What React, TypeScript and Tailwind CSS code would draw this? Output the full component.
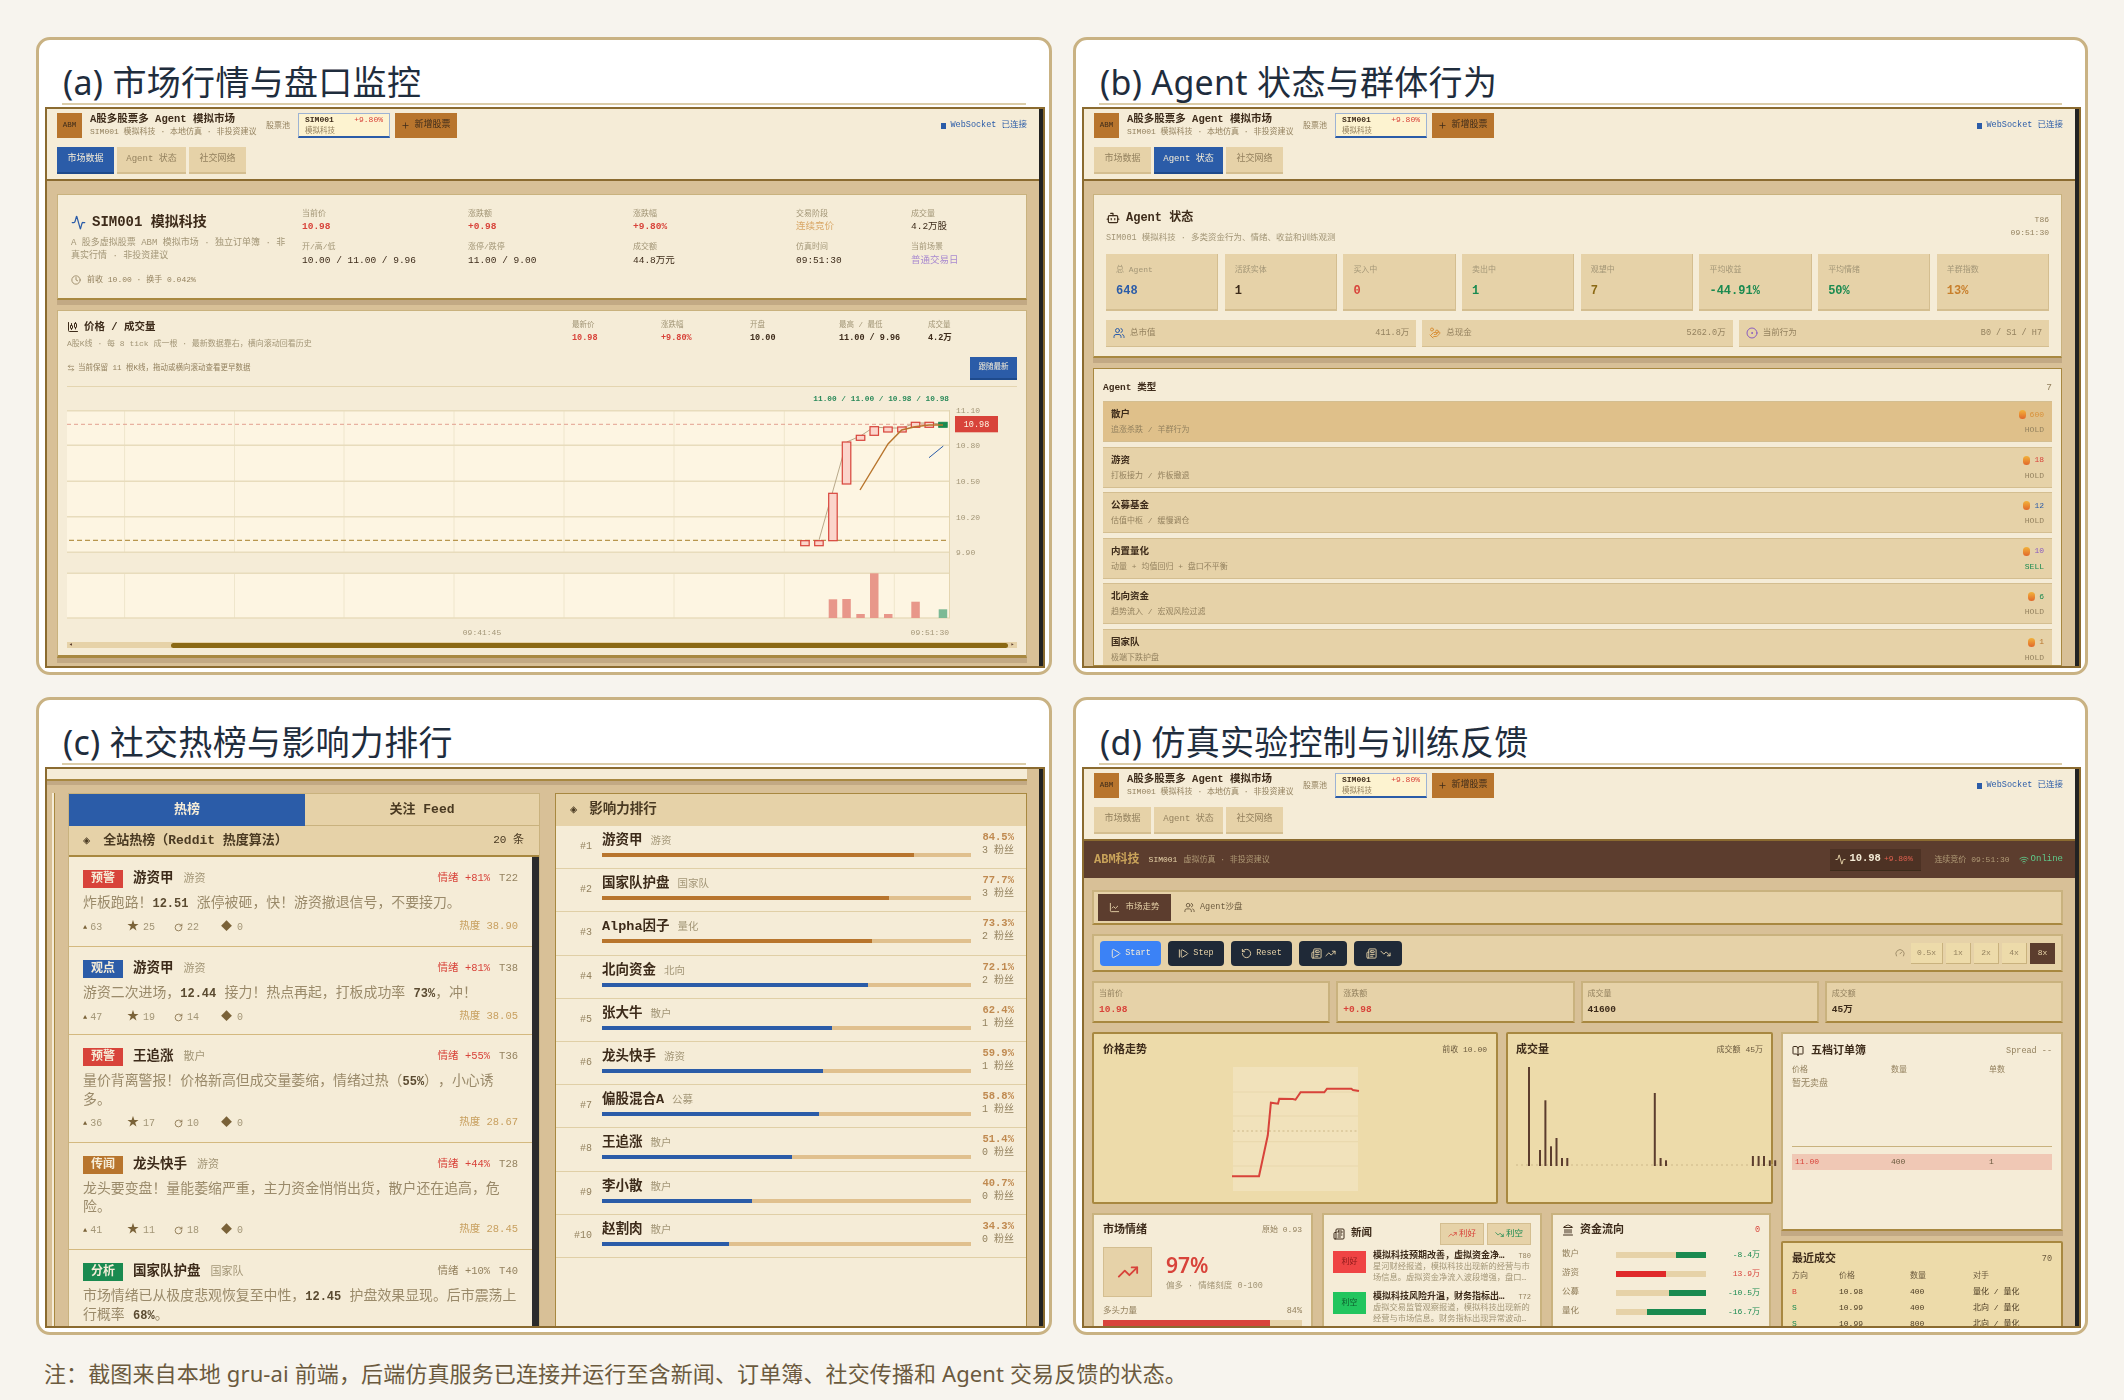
import type { ReactNode } from "react";
import {
  Activity,
  ArrowLeftRight,
  Bot,
  BookOpen,
  ChartCandlestick,
  ChartLine,
  CircleDot,
  Clock,
  Gauge,
  HandCoins,
  Landmark,
  Newspaper,
  Play,
  Plus,
  RotateCcw,
  RotateCw,
  StepForward,
  TrendingDown,
  TrendingUp,
  Users,
  Wifi,
} from "lucide-react";

// 子图外框: 标题 + 下划线 + 截图区域
const Figure = ({ title, children }: { title: string; children: ReactNode }) => (
  <section className="h-[638px] border-[3px] border-[#c9b283] rounded-[14px] bg-white pl-[6px] pr-[4px]">
    <h2 className="pt-[22px] pl-[18px] text-[34px] leading-[40px] text-[#1f2d3d] tracking-[0.3px] whitespace-nowrap">
      {title}
    </h2>
    <div className="ml-[17px] mr-[19px] mt-px mb-[2px] h-[2px] bg-[#dccda8]" />
    <div className="h-[561px] flex border-[2px] border-[#8b6b30] overflow-hidden bg-[#d8c097] blur-[0.4px] [font-family:'Liberation_Mono','Noto_Sans_CJK_SC',monospace]">
      <div className="flex-1 min-w-0 flex flex-col">{children}</div>
      <div className="w-[4px] bg-[#222]" />
    </div>
  </section>
);

const Header = ({ active }: { active: number }) => (
  <header className="shrink-0 h-[72px] pt-[4px] pl-[10px] pr-[12px] bg-[#f5ecd7] border-b-[2px] border-[#8b6b30]">
    <div className="h-[25px] flex items-center">
      <div className="w-[25px] h-[25px] flex items-center justify-center bg-[#b8752d] text-[7.5px] text-[#3d2b1a]">ABM</div>
      <div className="ml-[8px] w-[168px]">
        <div className="text-[10.5px] leading-[13px] font-bold text-[#3d2b1a] whitespace-nowrap">A股多股票多 Agent 模拟市场</div>
        <div className="text-[8px] leading-[12px] text-[#94825f] whitespace-nowrap">SIM001 模拟科技 · 本地仿真 · 非投资建议</div>
      </div>
      <span className="ml-[8px] w-[24px] text-[8px] text-[#94825f] whitespace-nowrap">股票池</span>
      <div className="ml-[8px] w-[92px] h-[25px] px-[6px] bg-[#fdf3d0] border border-[#9db3d4] border-b-[2px] border-b-[#2b5ca8]">
        <div className="flex justify-between text-[8px] leading-[12px]">
          <b className="text-[#3d2b1a]">SIM001</b>
          <span className="text-[#d8433a]">+9.80%</span>
        </div>
        <div className="text-[7.5px] leading-[10px] text-[#94825f]">模拟科技</div>
      </div>
      <div className="ml-[5px] w-[62px] h-[25px] flex items-center justify-center gap-[4px] bg-[#b8752d] text-[9px] text-[#3d2b1a]">
        <Plus className="w-[9px] h-[9px]" />
        新增股票
      </div>
      <div className="ml-auto flex items-center gap-[4px] text-[8.5px] text-[#2b5ca8] whitespace-nowrap">
        <span className="w-[5px] h-[6px] bg-[#2b5ca8]" />
        WebSocket 已连接
      </div>
    </div>
    <div className="mt-[9px] flex gap-[3px] text-[9px]">
      {["市场数据", "Agent 状态", "社交网络"].map((t, i) => (
        <div
          key={t}
          className={`h-[27px] flex items-center justify-center border-b-[2px] whitespace-nowrap ${i === 1 ? "w-[69px]" : "w-[57px]"} ${
            i === active ? "bg-[#2b5ca8] text-[#f5ecd7] border-[#1e4a8c]" : "bg-[#e6d2a8] text-[#94825f] border-[#d4be90]"
          }`}
        >
          {t}
        </div>
      ))}
    </div>
  </header>
);

// (a)
const quote = [
  { x: "w-[166px]", a: ["当前价", "10.98", "text-[#d8433a] font-bold"], b: ["开/高/低", "10.00 / 11.00 / 9.96", "text-[#3d2b1a]"] },
  { x: "w-[165px]", a: ["涨跌额", "+0.98", "text-[#d8433a] font-bold"], b: ["涨停/跌停", "11.00 / 9.00", "text-[#3d2b1a]"] },
  { x: "w-[163px]", a: ["涨跌幅", "+9.80%", "text-[#d8433a] font-bold"], b: ["成交额", "44.8万元", "text-[#3d2b1a]"] },
  { x: "w-[115px]", a: ["交易阶段", "连续竞价", "text-[#d9a868]"], b: ["仿真时间", "09:51:30", "text-[#3d2b1a]"] },
  { x: "w-[100px]", a: ["成交量", "4.2万股", "text-[#3d2b1a]"], b: ["当前场景", "普通交易日", "text-[#a98ad0]"] },
];

const chartHead = [
  ["最新价", "10.98", "text-[#d8433a] font-bold"],
  ["涨跌幅", "+9.80%", "text-[#d8433a] font-bold"],
  ["开盘", "10.00", "text-[#3d2b1a] font-bold"],
  ["最高 / 最低", "11.00 / 9.96", "text-[#3d2b1a] font-bold"],
  ["成交量", "4.2万", "text-[#3d2b1a] font-bold"],
];

const candles = [
  [800.7, 540.7, 5],
  [814.7, 540.7, 5],
  [828.7, 493.3, 47.4],
  [842.3, 442, 42],
  [856.3, 435.3, 5],
  [870, 426.7, 8.6],
  [883.7, 427, 5],
  [897.7, 427, 5],
  [911.3, 422.3, 5],
  [925, 422.3, 5],
];

const volumes = [
  [828.7, 599.3],
  [842.3, 599],
  [856.3, 614],
  [870, 573.3],
  [884, 614],
  [911.3, 601.7],
];

const KlineChart = () => (
  <svg viewBox="67 387 950 255" className="w-[950px] h-[255px] block">
    <rect x="67" y="410" width="883" height="143" fill="#fdf5e2" />
    <rect x="67" y="573" width="883" height="45" fill="#fdf5e2" />
    {[124.6, 234.5, 344, 454, 564, 674, 784.3, 894.3].map((x) => (
      <g key={x} stroke="#efe6cc" strokeWidth="1">
        <line x1={x} y1="410" x2={x} y2="553" />
        <line x1={x} y1="573" x2={x} y2="618" />
      </g>
    ))}
    {[410.7, 445.3, 481.3, 516.7, 552.3, 573.3, 618].map((y) => (
      <line key={y} x1="67" y1={y} x2="950" y2={y} stroke="#e8dcbc" strokeWidth="1.5" />
    ))}
    <line x1="949.5" y1="410" x2="949.5" y2="618" stroke="#e4d5b0" />
    <line x1="67" y1="424.3" x2="949" y2="424.3" stroke="#e3a090" strokeDasharray="4 3" />
    <line x1="69" y1="540.3" x2="946" y2="540.3" stroke="#b8964e" strokeWidth="1.2" strokeDasharray="5 3" />
    <polyline
      points="819,540 846.7,442 860.5,436 874,427 888,428 902,428 915.5,423 929,423 943,424"
      fill="none"
      stroke="#b8a88a"
    />
    {candles.map(([x, y, h]) => (
      <rect key={x} x={x} y={y} width="8.5" height={h} fill="#fbd5cb" stroke="#d8433a" strokeWidth="1.2" />
    ))}
    <rect x="938.7" y="422.3" width="8.5" height="5" fill="#1a8a50" stroke="#1a8a50" />
    <polyline
      points="860,490 888,444 901.7,430 915,426.7 929,425 943,425"
      fill="none"
      stroke="#b8752d"
      strokeWidth="1.4"
    />
    <line x1="929" y1="457.7" x2="943.3" y2="446" stroke="#2b5ca8" strokeWidth="1" />
    {volumes.map(([x, y]) => (
      <rect key={x} x={x} y={y} width="8.5" height={618 - y} fill="#e8978a" />
    ))}
    <rect x="938.7" y="609.3" width="8.5" height="8.7" fill="#7cba95" />
    <g fontSize="8" fill="#a39677">
      {[
        ["11.10", 413],
        ["10.80", 448],
        ["10.50", 484],
        ["10.20", 520],
        ["9.90", 555],
      ].map(([t, y]) => (
        <text key={t} x="956" y={y}>
          {t}
        </text>
      ))}
      <text x="482" y="635" textAnchor="middle">09:41:45</text>
      <text x="949" y="635" textAnchor="end">09:51:30</text>
    </g>
    <text x="949" y="401" textAnchor="end" fontSize="7.8" fontWeight="700" fill="#2a8a5a">
      11.00 / 11.00 / 10.98 / 10.98
    </text>
    <rect x="955" y="416" width="43" height="16.3" fill="#d8433a" />
    <text x="976.5" y="427" textAnchor="middle" fontSize="8.5" fill="#fdf5e2">10.98</text>
  </svg>
);

const PanelMarket = () => (
  <>
    <Header active={0} />
    <main className="flex-1 min-h-0 pt-[13px] pl-[10px] pr-[12px] flex flex-col gap-[10px]">
      <div className="h-[106px] shrink-0 flex pl-[13px] pt-[14px] bg-[#f5ecd7] border border-[#c9b27e] border-b-[2px] border-b-[#a88840] shadow-[0_5px_0_#c2a984]">
        <div className="w-[231px] shrink-0 pr-[9px] pt-[4px]">
          <div className="flex items-center gap-[6px] text-[14px] leading-[18px] font-bold text-[#3d2b1a] whitespace-nowrap">
            <Activity className="w-[15px] h-[15px] text-[#2b5ca8]" />
            SIM001 模拟科技
          </div>
          <p className="mt-[6px] text-[9px] leading-[13px] text-[#a39677]">
            A 股多虚拟股票 ABM 模拟市场 · 独立订单簿 · 非真实行情 · 非投资建议
          </p>
          <div className="mt-[11px] flex items-center gap-[6px] text-[8px] text-[#94825f]">
            <Clock className="w-[10px] h-[10px]" />
            前收 10.00 · 换手 0.042%
          </div>
        </div>
        <div className="flex">
          {quote.map((q) => (
            <div key={q.a[0]} className={q.x}>
              <div className="text-[8px] leading-[10px] text-[#a39677]">{q.a[0]}</div>
              <div className={`mt-[2px] text-[9.5px] leading-[12px] whitespace-nowrap ${q.a[2]}`}>{q.a[1]}</div>
              <div className="mt-[9px] text-[8px] leading-[10px] text-[#a39677]">{q.b[0]}</div>
              <div className={`mt-[3px] text-[9.5px] leading-[12px] whitespace-nowrap ${q.b[2]}`}>{q.b[1]}</div>
            </div>
          ))}
        </div>
      </div>
      <div className="h-[348px] shrink-0 px-[9px] pt-[9px] bg-[#f5ecd7] border border-[#c9b27e] border-b-[3px] border-b-[#a88840] shadow-[0_5px_0_#c2a984]">
        <div className="flex justify-between h-[37px]">
          <div>
            <div className="flex items-center gap-[5px] text-[10.5px] leading-[14px] font-bold text-[#3d2b1a]">
              <ChartCandlestick className="w-[12px] h-[12px]" />
              价格 / 成交量
            </div>
            <div className="mt-[4px] text-[8px] leading-[11px] text-[#a39677]">
              A股K线 · 每 8 tick 成一根 · 最新数据靠右&#xFF0C;横向滚动回看历史
            </div>
          </div>
          <div className="flex">
            {chartHead.map(([l, v, c]) => (
              <div key={l} className="w-[89px]">
                <div className="text-[7.5px] leading-[10px] text-[#a39677] whitespace-nowrap">{l}</div>
                <div className={`mt-[3px] text-[8.5px] leading-[11px] whitespace-nowrap ${c}`}>{v}</div>
              </div>
            ))}
          </div>
        </div>
        <div className="h-[29px] flex items-start justify-between">
          <div className="mt-[6px] flex items-center gap-[3px] text-[7.5px] leading-[10px] text-[#94825f]">
            <ArrowLeftRight className="w-[8px] h-[8px]" />
            当前保留 11 根K线&#xFF0C;拖动或横向滚动查看更早数据
          </div>
          <div className="w-[47px] h-[23px] flex items-center justify-center bg-[#2b5ca8] text-[7.5px] text-[#f5ecd7] border-b-[2px] border-[#1e4a8c]">
            跟随最新
          </div>
        </div>
        <div className="w-[950px] border-t border-[#e4d5b0]">
          <KlineChart />
          <div className="h-[6px] flex items-center bg-[#e6d2a8] text-[6px] leading-[6px] text-[#5c3d2e]">
            <span className="ml-[2px]">◂</span>
            <div className="ml-[98px] w-[837px] h-[5px] rounded-full bg-[#8b6914]" />
            <span className="ml-[3px]">▸</span>
          </div>
        </div>
      </div>
    </main>
  </>
);

// (b)
const agentStats = [
  ["总 Agent", "648", "text-[#2b5ca8]"],
  ["活跃实体", "1", "text-[#3d2b1a]"],
  ["买入中", "0", "text-[#d8433a]"],
  ["卖出中", "1", "text-[#1a8a50]"],
  ["观望中", "7", "text-[#8b6914]"],
  ["平均收益", "-44.91%", "text-[#1a8a50]"],
  ["平均情绪", "50%", "text-[#1a8a50]"],
  ["羊群指数", "13%", "text-[#c87f2c]"],
];

const agentTypes = [
  ["散户", "追涨杀跌 / 羊群行为", "600", "HOLD", "text-[#d9913a]", "text-[#94825f]"],
  ["游资", "打板接力 / 炸板撤退", "18", "HOLD", "text-[#d8433a]", "text-[#94825f]"],
  ["公募基金", "估值中枢 / 缓慢调仓", "12", "HOLD", "text-[#2b5ca8]", "text-[#94825f]"],
  ["内置量化", "动量 + 均值回归 + 盘口不平衡", "10", "SELL", "text-[#8a5cc0]", "text-[#1a8a50]"],
  ["北向资金", "趋势流入 / 宏观风险过滤", "6", "HOLD", "text-[#1a8a50]", "text-[#94825f]"],
  ["国家队", "极端下跌护盘", "1", "HOLD", "text-[#b8752d]", "text-[#94825f]"],
];

const PanelAgent = () => (
  <>
    <Header active={1} />
    <main className="flex-1 min-h-0 pt-[13px] pl-[9px] pr-[13px] flex flex-col gap-[10px]">
      <div className="h-[164px] shrink-0 px-[12px] pt-[15px] bg-[#f5ecd7] border border-[#c9b27e] border-b-[2px] border-b-[#a88840] shadow-[0_5px_0_#c2a984]">
        <div className="h-[44px] flex justify-between">
          <div>
            <div className="flex items-center gap-[6px] text-[12px] leading-[16px] font-bold text-[#3d2b1a]">
              <Bot className="w-[14px] h-[14px]" />
              Agent 状态
            </div>
            <div className="mt-[6px] text-[8.5px] leading-[12px] text-[#a39677]">
              SIM001 模拟科技 · 多类资金行为、情绪、收益和训练观测
            </div>
          </div>
          <div className="pt-[3px] text-right text-[8px] leading-[13px] text-[#94825f]">
            <div>T86</div>
            <div>09:51:30</div>
          </div>
        </div>
        <div className="grid grid-cols-8 gap-[6.5px]">
          {agentStats.map(([l, v, c]) => (
            <div key={l} className="h-[57px] pt-[10px] pl-[10px] bg-[#e6d2a8] border-b-[2px] border-r border-[#d4be90]">
              <div className="text-[8px] leading-[11px] text-[#a39677]">{l}</div>
              <div className={`mt-[9px] text-[12px] leading-[14px] font-bold ${c}`}>{v}</div>
            </div>
          ))}
        </div>
        <div className="mt-[9px] grid grid-cols-3 gap-[6px] text-[8.5px] text-[#94825f]">
          <div className="h-[27px] px-[7px] flex items-center gap-[5px] bg-[#e6d2a8] border-b border-[#d4be90]">
            <Users className="w-[12px] h-[12px] text-[#2b5ca8]" />
            总市值
            <span className="ml-auto">411.8万</span>
          </div>
          <div className="h-[27px] px-[7px] flex items-center gap-[5px] bg-[#e6d2a8] border-b border-[#d4be90]">
            <HandCoins className="w-[12px] h-[12px] text-[#d9913a]" />
            总现金
            <span className="ml-auto">5262.0万</span>
          </div>
          <div className="h-[27px] px-[7px] flex items-center gap-[5px] bg-[#e6d2a8] border-b border-[#d4be90]">
            <CircleDot className="w-[12px] h-[12px] text-[#8a5cc0]" />
            当前行为
            <span className="ml-auto">B0 / S1 / H7</span>
          </div>
        </div>
      </div>
      <div className="flex-1 min-h-0 overflow-hidden px-[9px] pt-[12px] bg-[#f5ecd7] border border-[#a88840]">
        <div className="h-[20px] flex justify-between text-[9.5px] font-bold text-[#3d2b1a]">
          Agent 类型
          <span className="font-normal text-[#94825f]">7</span>
        </div>
        <div className="flex flex-col gap-[4.6px]">
          {agentTypes.map(([name, sub, n, act, nc, ac], i) => (
            <div
              key={name}
              className={`h-[41px] shrink-0 flex justify-between px-[8px] pt-[6px] border-y border-[#d4be90] ${
                i === 0 ? "bg-[#dfc08a]" : "bg-[#e6d2a8]"
              }`}
            >
              <div>
                <div className="text-[9.5px] leading-[13px] font-bold text-[#3d2b1a]">{name}</div>
                <div className="mt-[3px] text-[8px] leading-[11px] text-[#94825f]">{sub}</div>
              </div>
              <div className="text-right text-[8px]">
                <div className="h-[13px] flex items-center justify-end gap-[4px]">
                  <span className="w-[7px] h-[9px] rounded-full bg-linear-to-b from-[#f2b23a] to-[#e0662a]" />
                  <span className={nc}>{n}</span>
                </div>
                <div className={`mt-[3px] leading-[11px] ${ac}`}>{act}</div>
              </div>
            </div>
          ))}
        </div>
      </div>
    </main>
  </>
);

// (c)
const Hl = ({ children }: { children: ReactNode }) => <b className="text-[12px] text-[#5a4a30]">{children}</b>;

const posts = [
  {
    tag: "预警", tc: "bg-[#d8433a]", name: "游资甲", role: "游资", mood: "+81%", hot: true, t: "T22", stats: [63, 25, 22, 0], heat: "38.90", h: "h-[90px]",
    body: <>炸板跑路&#xFF01;<Hl>12.51</Hl> 涨停被砸&#xFF0C;快&#xFF01;游资撤退信号&#xFF0C;不要接刀。</>,
  },
  {
    tag: "观点", tc: "bg-[#2b5ca8]", name: "游资甲", role: "游资", mood: "+81%", hot: true, t: "T38", stats: [47, 19, 14, 0], heat: "38.05", h: "h-[88px]",
    body: <>游资二次进场&#xFF0C;<Hl>12.44</Hl> 接力&#xFF01;热点再起&#xFF0C;打板成功率 <Hl>73%</Hl>&#xFF0C;冲&#xFF01;</>,
  },
  {
    tag: "预警", tc: "bg-[#d8433a]", name: "王追涨", role: "散户", mood: "+55%", hot: true, t: "T36", stats: [36, 17, 10, 0], heat: "28.67", h: "h-[108px]",
    body: <>量价背离警报&#xFF01;价格新高但成交量萎缩&#xFF0C;情绪过热&#xFF08;<Hl>55%</Hl>&#xFF09;&#xFF0C;小心诱多。</>,
  },
  {
    tag: "传闻", tc: "bg-[#b8752d]", name: "龙头快手", role: "游资", mood: "+44%", hot: true, t: "T28", stats: [41, 11, 18, 0], heat: "28.45", h: "h-[107px]",
    body: <>龙头要变盘&#xFF01;量能萎缩严重&#xFF0C;主力资金悄悄出货&#xFF0C;散户还在追高&#xFF0C;危险。</>,
  },
  {
    tag: "分析", tc: "bg-[#1a8a50]", name: "国家队护盘", role: "国家队", mood: "+10%", hot: false, t: "T40", h: "h-[78px]",
    body: <>市场情绪已从极度悲观恢复至中性&#xFF0C;<Hl>12.45</Hl> 护盘效果显现。后市震荡上行概率 <Hl>68%</Hl>。</>,
  },
];

const ranks = [
  ["游资甲", "游资", 84.5, 3],
  ["国家队护盘", "国家队", 77.7, 3],
  ["Alpha因子", "量化", 73.3, 2],
  ["北向资金", "北向", 72.1, 2],
  ["张大牛", "散户", 62.4, 1],
  ["龙头快手", "游资", 59.9, 1],
  ["偏股混合A", "公募", 58.8, 1],
  ["王追涨", "散户", 51.4, 0],
  ["李小散", "散户", 40.7, 0],
  ["赵割肉", "散户", 34.3, 0],
] as const;

const PanelSocial = () => (
  <main className="h-full flex flex-col">
    <div className="h-[12px] shrink-0 mr-[12px] bg-[#f5ecd7] border-b-[2px] border-[#a88840] shadow-[0_4px_0_#c2a984]" />
    <div className="flex-1 min-h-0 mt-[12px] flex">
      <div className="ml-[5px] w-[3px] bg-[#f5ecd7] border-r border-[#a88840]" />
      <div className="ml-[13px] w-[472px] flex flex-col border-t border-x border-[#c9b27e] bg-[#d8c097]">
        <div className="h-[32px] shrink-0 flex font-bold">
          <div className="w-[236px] flex items-center justify-center bg-[#2b5ca8] text-[13px] text-[#f5ecd7]">热榜</div>
          <div className="flex-1 flex items-center justify-center bg-[#e6d2a8] text-[13px] text-[#4a3a22] border-b border-[#c9b27e]">关注 Feed</div>
        </div>
        <div className="h-[31px] shrink-0 px-[14px] flex items-center justify-between bg-[#e6d2a8] border-b-[2px] border-[#a88840] text-[13px] font-bold text-[#4a3a22]">
          <span className="flex items-center gap-[13px] whitespace-nowrap">
            <span className="text-[12px]">◈</span>
            全站热榜&#xFF08;Reddit 热度算法&#xFF09;
          </span>
          <span className="text-[11px] font-normal pr-px">20 条</span>
        </div>
        <div className="flex flex-1 min-h-0">
          <div className="flex-1 min-w-0">
            {posts.map((p) => (
              <article key={p.t} className={`${p.h} px-[14px] pt-[13px] bg-[#f5ecd7] border-b border-[#d4b97f]`}>
                <div className="h-[18px] flex items-center">
                  <span className={`w-[40px] h-[18px] flex items-center justify-center text-[12px] font-bold text-[#f5ecd7] ${p.tc}`}>{p.tag}</span>
                  <b className="ml-[10px] text-[13.5px] text-[#3d2b1a]">{p.name}</b>
                  <span className="ml-[10px] text-[11px] text-[#a39677]">{p.role}</span>
                  <span className={`ml-auto text-[10.5px] ${p.hot ? "text-[#d8433a]" : "text-[#94825f]"}`}>情绪 {p.mood}</span>
                  <span className="ml-[9px] text-[10.5px] text-[#94825f]">{p.t}</span>
                </div>
                <p className="mt-[6px] text-[13.9px] leading-[18px] text-[#9a8a6a] [text-spacing-trim:space-all]">{p.body}</p>
                {p.stats && (
                  <div className="mt-[7px] h-[14px] flex items-center text-[10px] text-[#a39677]">
                    <span className="w-[44px] flex items-center gap-[3px]">
                      <span className="text-[#7a6238] text-[7px]">▲</span>
                      {p.stats[0]}
                    </span>
                    <span className="w-[47px] flex items-center gap-[4px]">
                      <span className="text-[#7a6238] text-[12px]">★</span>
                      {p.stats[1]}
                    </span>
                    <span className="w-[47px] flex items-center gap-[4px]">
                      <RotateCw className="w-[9px] h-[9px] text-[#7a6238]" />
                      {p.stats[2]}
                    </span>
                    <span className="flex items-center gap-[5px]">
                      <span className="text-[#7a6238] text-[11px]">◆</span>
                      {p.stats[3]}
                    </span>
                    <span className="ml-auto text-[10.5px] text-[#c8a060]">热度 {p.heat}</span>
                  </div>
                )}
              </article>
            ))}
          </div>
          <div className="w-[7px] bg-[#2b2b2b]" />
        </div>
      </div>
      <div className="ml-[15px] w-[472px] border border-[#a88840] border-b-0 bg-[#f5ecd7]">
        <div className="h-[32px] px-[14px] flex items-center gap-[12px] bg-[#e6d2a8] text-[13.5px] font-bold text-[#4a3a22]">
          <span className="text-[12px]">◈</span>
          影响力排行
        </div>
        {ranks.map(([name, role, pct, fans], i) => (
          <div key={name} className="h-[43.2px] flex border-b border-[#e0cfa6]">
            <span className="w-[36px] mt-[15px] text-right text-[10px] leading-[12px] text-[#94825f]">#{i + 1}</span>
            <div className="ml-[10px] w-[369px] pt-[7px]">
              <div className="flex items-baseline gap-[8px] leading-[16px]">
                <b className="text-[13.5px] text-[#3d2b1a]">{name}</b>
                <span className="text-[10.5px] text-[#a39677]">{role}</span>
              </div>
              <div className="mt-[4px] h-[4px] bg-[#e0c08e]">
                <div className={`h-full ${i < 3 ? "bg-[#b8752d]" : "bg-[#2b5ca8]"}`} style={{ width: `${pct}%` }} />
              </div>
            </div>
            <div className="ml-[10px] w-[33px] pt-[5px] shrink-0 text-right whitespace-nowrap">
              <div className="text-[10.5px] leading-[13px] font-bold text-[#c08a50] flex justify-end">{pct}%</div>
              <div className="text-[10px] leading-[13px] text-[#94825f] flex justify-end">{fans} 粉丝</div>
            </div>
          </div>
        ))}
      </div>
    </div>
  </main>
);

// (d)
const pricePath =
  "-1,109.3 26,109.3 34.8,68.3 37.9,35.7 45,36.7 46.3,31.7 59.8,32 62.5,32.7 67.6,25.3 91.3,25.3 94,21.7 118.3,21.7 120,23 126,24";

const tradeBars = [
  [12, 99], [23, 16], [28.4, 65.7], [34, 19.7], [39.5, 28], [45, 8], [50.3, 8],
  [137.8, 73], [143.6, 8], [149, 5.7], [235.9, 10], [241.6, 10], [247, 10], [252.8, 5.7], [258.2, 5.7],
];

const flows = [
  ["散户", "-8.4万", "justify-end", "w-[33%]", "bg-[#1a8a50]", "text-[#1a8a50]"],
  ["游资", "13.9万", "justify-start", "w-[55%]", "bg-[#e02a2a]", "text-[#d8433a]"],
  ["公募", "-10.5万", "justify-end", "w-[41%]", "bg-[#1a8a50]", "text-[#1a8a50]"],
  ["量化", "-16.7万", "justify-end", "w-[66%]", "bg-[#1a8a50]", "text-[#1a8a50]"],
];

const news = [
  ["利好", "bg-[#ef4444]", "text-[#8b1a1a]", "模拟科技预期改善\uFF0C虚拟资金净…", "T80", "星河财经报道\uFF0C模拟科技出现新的经营与市场信息。虚拟资金净流入波段增强\uFF0C盘口…"],
  ["利空", "bg-[#22c55e]", "text-[#0f5c2e]", "模拟科技风险升温\uFF0C财务指标出…", "T72", "虚拟交易监管观察报道\uFF0C模拟科技出现新的经营与市场信息。财务指标出现异常波动…"],
];

const cardLight = "bg-[#f5ecd7] border-[2px] border-[#c9b27e] border-b-[#a88840]";
const cardDark = "bg-[#eddbaa] border-[2px] border-[#a88840] rounded-[2px]";

const PanelControl = () => (
  <>
    <Header active={-1} />
    <div className="h-[37px] shrink-0 flex items-center pl-[10px] pr-[12px] bg-[#5c3d2e] text-[8px] text-[#b09a76]">
      <b className="text-[12px] text-[#c9a35a]">ABM科技</b>
      <span className="ml-[9px] text-[#e6d2a8]">SIM001</span>
      <span className="ml-[6px]">虚拟仿真 · 非投资建议</span>
      <div className="ml-auto w-[91px] h-[22px] flex items-center gap-[3px] pl-[5px] bg-[#4d3224] border-b border-[#3d2b1a]">
        <Activity className="w-[11px] h-[11px] text-[#e6d2a8]" />
        <b className="text-[10.5px] text-[#f5ecd7]">10.98</b>
        <span className="text-[#e0604f]">+9.80%</span>
      </div>
      <span className="ml-[13px]">连续竞价 09:51:30</span>
      <Wifi className="ml-[9px] w-[10px] h-[10px] text-[#5fc98a]" />
      <span className="ml-[2px] text-[9px] text-[#5fc98a]">Online</span>
    </div>
    <main className="flex-1 min-h-0 pt-[12px] pl-[8px] pr-[12px] flex flex-col gap-[9px]">
      <div className="h-[35px] shrink-0 px-[4px] flex items-center gap-[13px] bg-[#e6d2a8] border-[2px] border-[#c9b27e] border-b-[#a88840] text-[8.5px]">
        <div className="w-[73px] h-[27px] flex items-center justify-center gap-[5px] bg-[#5c3d2e] text-[#e6d2a8]">
          <ChartLine className="w-[11px] h-[11px]" />
          市场走势
        </div>
        <div className="flex items-center gap-[5px] text-[#6b5a3e]">
          <Users className="w-[11px] h-[11px]" />
          Agent沙盘
        </div>
      </div>
      <div className="h-[38px] shrink-0 px-[6px] flex items-center gap-[7px] bg-[#e6d2a8] border-[2px] border-[#c9b27e] border-b-[#a88840] text-[8.5px]">
        <div className="w-[61px] h-[25px] flex items-center justify-center gap-[4px] rounded-[4px] bg-[#3b82f6] text-[#f5ecd7]">
          <Play className="w-[11px] h-[11px]" />
          Start
        </div>
        <div className="w-[56px] h-[25px] flex items-center justify-center gap-[4px] rounded-[4px] bg-[#1f2937] text-[#e6d2a8]">
          <StepForward className="w-[11px] h-[11px]" />
          Step
        </div>
        <div className="w-[61px] h-[25px] flex items-center justify-center gap-[4px] rounded-[4px] bg-[#1f2937] text-[#e6d2a8]">
          <RotateCcw className="w-[11px] h-[11px]" />
          Reset
        </div>
        <div className="w-[48px] h-[25px] flex items-center justify-center gap-[3px] rounded-[4px] bg-[#1f2937] text-[#e6d2a8]">
          <Newspaper className="w-[11px] h-[11px]" />
          <TrendingUp className="w-[11px] h-[11px]" />
        </div>
        <div className="w-[48px] h-[25px] flex items-center justify-center gap-[3px] rounded-[4px] bg-[#1f2937] text-[#e6d2a8]">
          <Newspaper className="w-[11px] h-[11px]" />
          <TrendingDown className="w-[11px] h-[11px]" />
        </div>
        <div className="ml-auto flex items-center gap-[3px] text-[#94825f] text-[8px]">
          <Gauge className="w-[10px] h-[10px] mr-[3px]" />
          {["0.5x", "1x", "2x", "4x"].map((s) => (
            <div key={s} className={`${s === "0.5x" ? "w-[32px]" : "w-[25px]"} h-[21px] flex items-center justify-center bg-[#eddbaa] border-b border-r border-[#c9b27e]`}>
              {s}
            </div>
          ))}
          <div className="w-[25px] h-[21px] flex items-center justify-center bg-[#5c3d2e] text-[#e6d2a8]">8x</div>
        </div>
      </div>
      <div className="h-[42px] shrink-0 grid grid-cols-4 gap-[6px]">
        {[
          ["当前价", "10.98", "text-[#d8433a]"],
          ["涨跌额", "+0.98", "text-[#d8433a]"],
          ["成交量", "41600", "text-[#3d2b1a]"],
          ["成交额", "45万", "text-[#3d2b1a]"],
        ].map(([l, v, c]) => (
          <div key={l} className="px-[5px] pt-[5px] bg-[#e6d2a8] border-[2px] border-[#c9b27e] border-b-[#a88840]">
            <div className="text-[8px] leading-[11px] text-[#94825f]">{l}</div>
            <div className={`mt-[5px] text-[9.5px] leading-[12px] font-bold ${c}`}>{v}</div>
          </div>
        ))}
      </div>
      <div className="flex-1 min-h-0 flex gap-[8px]">
        <div className="w-[681px] shrink-0 flex flex-col gap-[9px]">
          <div className="h-[172px] shrink-0 flex gap-[8px]">
            <div className={`w-[406px] px-[9px] pt-[7px] ${cardDark}`}>
              <div className="h-[18px] flex justify-between items-center text-[11px] font-bold text-[#3d2b1a]">
                价格走势
                <span className="text-[8px] font-normal text-[#6b5a3e]">前收 10.00</span>
              </div>
              <svg viewBox="0 0 125 124" className="mx-auto mt-[8px] w-[125px] h-[124px] overflow-visible">
                <rect width="125" height="124" fill="#f1e2bb" />
                {[25, 49, 74.7, 99].map((y) => (
                  <line key={y} x1="0" y1={y} x2="125" y2={y} stroke="#e8d7ac" />
                ))}
                <line x1="0" y1="64" x2="125" y2="64" stroke="#cdb888" strokeDasharray="2 2.5" />
                <polyline points={pricePath} fill="none" stroke="#d8433a" strokeWidth="2" />
              </svg>
            </div>
            <div className={`w-[267px] pl-[8px] pr-[8px] pt-[7px] ${cardDark}`}>
              <div className="h-[18px] flex justify-between items-center text-[11px] font-bold text-[#3d2b1a]">
                成交量
                <span className="text-[8px] font-normal text-[#6b5a3e]">成交额 45万</span>
              </div>
              <svg viewBox="0 0 259 99" className="mt-[8px] w-[259px] h-[99px] overflow-visible">
                <line x1="0" y1="98" x2="259" y2="98" stroke="#cdb888" strokeDasharray="2 3" />
                {tradeBars.map(([x, h]) => (
                  <rect key={x} x={x} y={99 - h} width="2" height={h} fill="#5c3d2e" />
                ))}
              </svg>
            </div>
          </div>
          <div className="flex-1 min-h-0 flex gap-[9px] overflow-hidden">
            <div className={`w-[221px] shrink-0 h-[130px] px-[9px] pt-[6px] ${cardLight}`}>
              <div className="h-[18px] flex justify-between items-center text-[11px] font-bold text-[#3d2b1a]">
                市场情绪
                <span className="text-[8px] font-normal text-[#94825f]">原始 0.93</span>
              </div>
              <div className="mt-[8px] flex items-center gap-[14px]">
                <div className="w-[49px] h-[50px] flex items-center justify-center bg-[#e6d2a8] border border-[#d4be90]">
                  <TrendingUp className="w-[22px] h-[22px] text-[#d8433a]" />
                </div>
                <div>
                  <div className="[font-family:'Noto_Sans',sans-serif] text-[21px] leading-[26px] font-semibold text-[#d8433a]">97%</div>
                  <div className="mt-[2px] text-[8.5px] leading-[12px] text-[#a39677] whitespace-nowrap">偏多 · 情绪刻度 0-100</div>
                </div>
              </div>
              <div className="mt-[8px] flex justify-between text-[8.5px] leading-[12px] text-[#94825f]">
                多头力量
                <span>84%</span>
              </div>
              <div className="mt-[3px] h-[8px] bg-[#e6d2a8]">
                <div className="w-[84%] h-full bg-[#d8433a]" />
              </div>
            </div>
            <div className={`w-[220px] shrink-0 h-[130px] px-[9px] pt-[8px] ${cardLight}`}>
              <div className="h-[22px] flex items-center justify-between">
                <span className="flex items-center gap-[6px] text-[10.5px] font-bold text-[#3d2b1a]">
                  <Newspaper className="w-[12px] h-[12px]" />
                  新闻
                </span>
                <span className="flex gap-[3px] text-[8.5px]">
                  <span className="w-[44px] h-[22px] flex items-center justify-center gap-[2px] bg-[#e6d2a8] border border-[#d4be90] text-[#d8433a]">
                    <TrendingUp className="w-[9px] h-[9px]" />
                    利好
                  </span>
                  <span className="w-[44px] h-[22px] flex items-center justify-center gap-[2px] bg-[#e6d2a8] border border-[#d4be90] text-[#1a8a50]">
                    <TrendingDown className="w-[9px] h-[9px]" />
                    利空
                  </span>
                </span>
              </div>
              {news.map(([tag, bg, fg, head, t, desc]) => (
                <div key={tag} className="mt-[6px] h-[35px] flex gap-[7px]">
                  <span className={`w-[33px] h-[22px] shrink-0 flex items-center justify-center text-[8px] ${bg} ${fg}`}>{tag}</span>
                  <div className="min-w-0 flex-1">
                    <div className="flex justify-between text-[9px] leading-[11px]">
                      <b className="text-[#3d2b1a] whitespace-nowrap">{head}</b>
                      <span className="text-[7px] text-[#94825f]">{t}</span>
                    </div>
                    <p className="text-[8.25px] leading-[10.5px] text-[#a39677]">{desc}</p>
                  </div>
                </div>
              ))}
            </div>
            <div className={`w-[220px] shrink-0 h-[130px] px-[9px] pt-[6px] ${cardLight}`}>
              <div className="h-[18px] flex justify-between items-center text-[11px] font-bold text-[#3d2b1a]">
                <span className="flex items-center gap-[6px]">
                  <Landmark className="w-[12px] h-[12px]" />
                  资金流向
                </span>
                <span className="text-[8.5px] font-normal text-[#d8433a]">0</span>
              </div>
              <div className="mt-[8px] flex flex-col gap-[4px]">
                {flows.map(([l, v, side, w, bg, c]) => (
                  <div key={l} className="h-[15px] flex items-center text-[8px]">
                    <span className="w-[54px] text-[8.5px] text-[#94825f]">{l}</span>
                    <div className={`w-[90px] h-[6px] flex bg-[#e6d2a8] ${side}`}>
                      <div className={`${w} ${bg}`} />
                    </div>
                    <span className={`ml-auto ${c}`}>{v}</span>
                  </div>
                ))}
              </div>
            </div>
          </div>
        </div>
        <div className="flex-1 min-w-0 flex flex-col gap-[10px]">
          <div className={`h-[199px] shrink-0 px-[9px] pt-[7px] shadow-[0_5px_0_#c2a984] ${cardLight}`}>
            <div className="h-[20px] flex justify-between items-center text-[11px] font-bold text-[#3d2b1a]">
              <span className="flex items-center gap-[7px]">
                <BookOpen className="w-[12px] h-[12px]" />
                五档订单簿
              </span>
              <span className="text-[8.5px] font-normal text-[#94825f]">Spread --</span>
            </div>
            <div className="mt-[3px] grid grid-cols-[99px_98px_1fr] text-[8px] leading-[11px] text-[#94825f]">
              <span>价格</span>
              <span>数量</span>
              <span>单数</span>
            </div>
            <div className="mt-[3px] h-[68px] text-[9px] leading-[12px] text-[#94825f]">暂无卖盘</div>
            <div className="h-px bg-[#c9b27e]" />
            <div className="mt-[7px] h-[16px] px-[3px] grid grid-cols-[96px_98px_1fr] items-center bg-[#f0c8b5] text-[8px] text-[#6b5a3e]">
              <span className="text-[#d8433a]">11.00</span>
              <span>400</span>
              <span>1</span>
            </div>
          </div>
          <div className={`flex-1 px-[9px] pt-[7px] ${cardDark}`}>
            <div className="h-[18px] flex justify-between items-center text-[11px] font-bold text-[#3d2b1a]">
              最近成交
              <span className="text-[8.5px] font-normal text-[#6b5a3e]">70</span>
            </div>
            <div className="mt-[2px] grid grid-cols-[47px_71px_63px_1fr] text-[8px] leading-[12px] text-[#6b5a3e]">
              <span>方向</span>
              <span>价格</span>
              <span>数量</span>
              <span>对手</span>
            </div>
            {[
              ["B", "10.98", "400", "量化 / 量化", "text-[#d8433a]"],
              ["S", "10.99", "400", "北向 / 量化", "text-[#1a8a50]"],
              ["S", "10.99", "800", "北向 / 量化", "text-[#1a8a50]"],
            ].map(([d, p, q, who, c], i) => (
              <div key={i} className="mt-[3px] grid grid-cols-[47px_71px_63px_1fr] text-[8px] leading-[13px] text-[#4a3a22]">
                <span className={c}>{d}</span>
                <span>{p}</span>
                <span>{q}</span>
                <span>{who}</span>
              </div>
            ))}
          </div>
        </div>
      </div>
    </main>
  </>
);

export default function App() {
  return (
    <div className="w-[2124px] h-[1400px] overflow-hidden bg-[#f7f4ee] pt-[37px] pl-[36px] [font-family:'Noto_Sans','Noto_Sans_CJK_SC',sans-serif]">
      <div className="grid grid-cols-[1016px_1015px] gap-x-[21px] gap-y-[22px]">
        <Figure title="(a) 市场行情与盘口监控">
          <PanelMarket />
        </Figure>
        <Figure title="(b) Agent 状态与群体行为">
          <PanelAgent />
        </Figure>
        <Figure title="(c) 社交热榜与影响力排行">
          <PanelSocial />
        </Figure>
        <Figure title="(d) 仿真实验控制与训练反馈">
          <PanelControl />
        </Figure>
      </div>
      <p className="mt-[22px] pl-[8px] text-[22px] leading-[32px] tracking-[0.12px] text-[#6b5a3e]">
        注&#xFF1A;截图来自本地 gru-ai 前端&#xFF0C;后端仿真服务已连接并运行至含新闻、订单簿、社交传播和 Agent 交易反馈的状态。
      </p>
    </div>
  );
}
